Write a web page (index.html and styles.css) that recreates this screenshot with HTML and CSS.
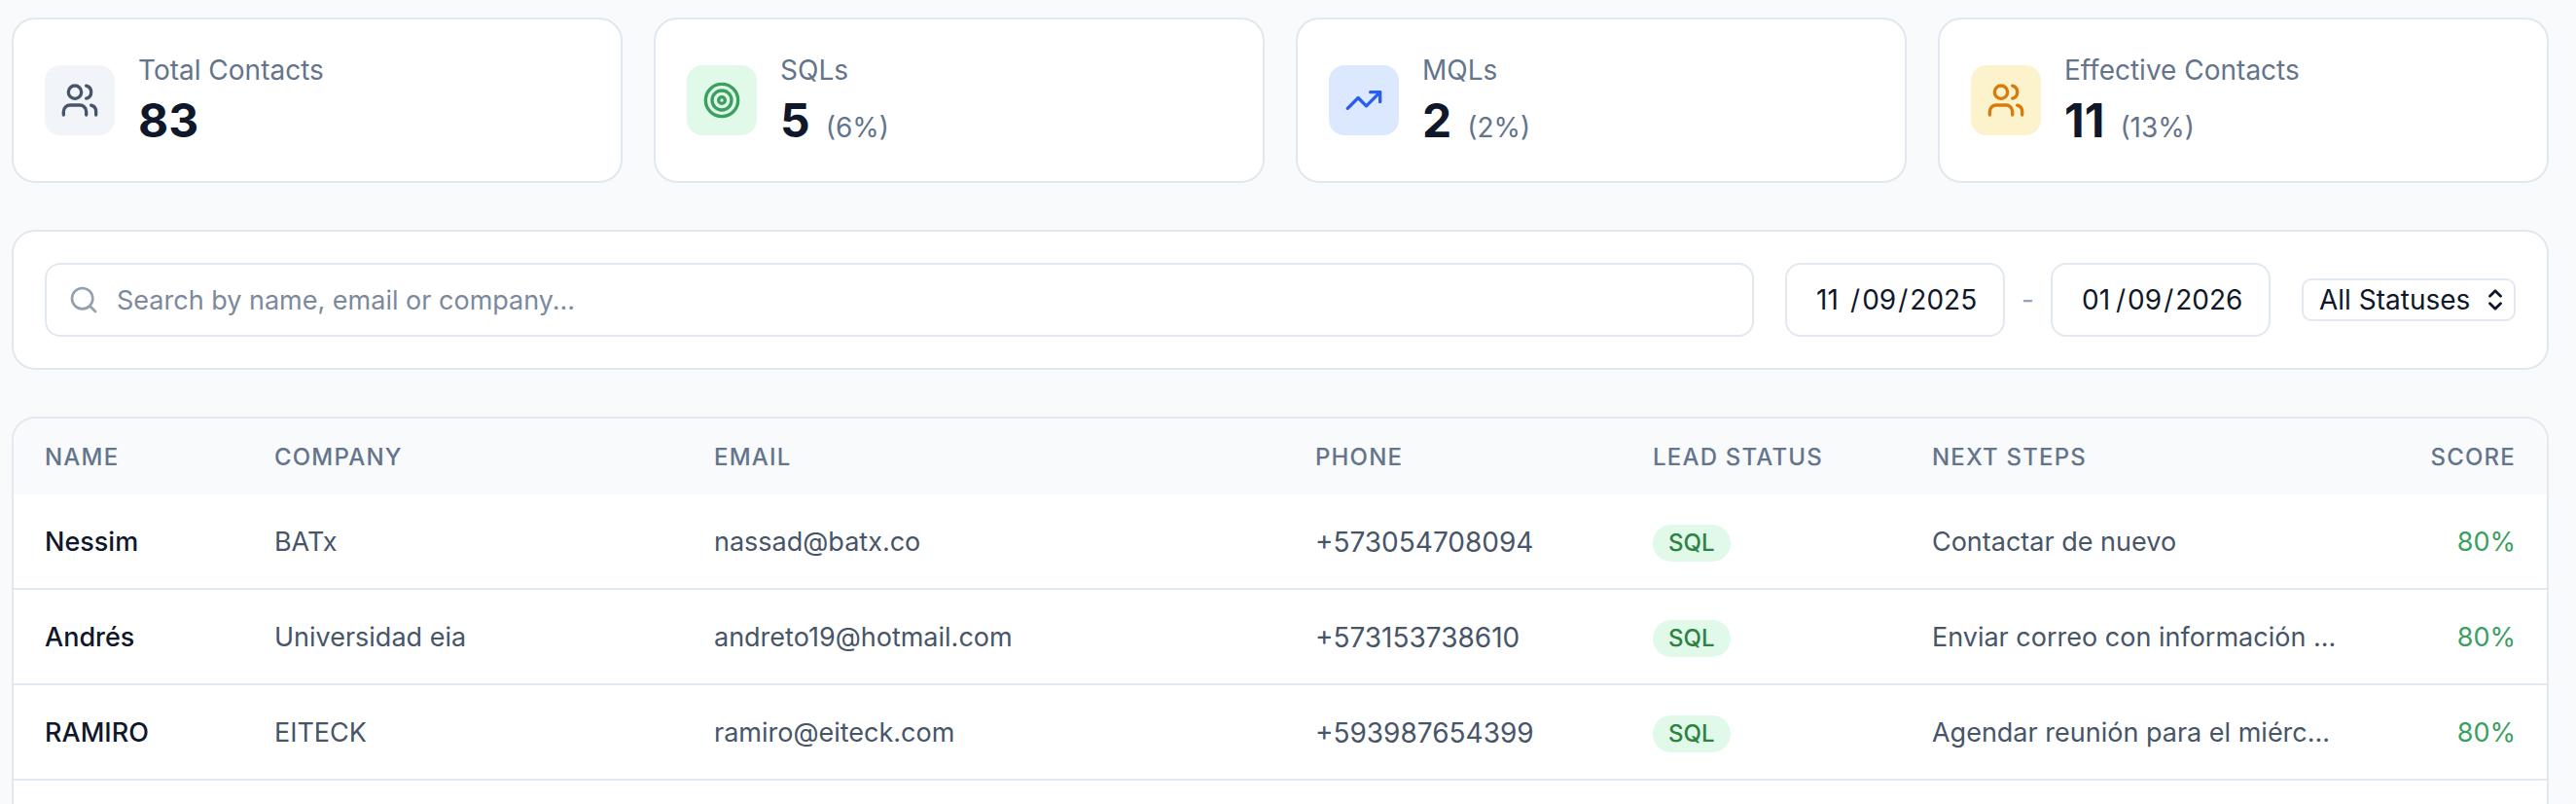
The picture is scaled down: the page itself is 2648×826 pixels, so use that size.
FILE: index.html
```html
<!DOCTYPE html>
<html lang="en">
  <head>
    <meta charset="UTF-8" />
    <meta name="viewport" content="width=device-width, initial-scale=1.0" />
    <title>Contacts</title>

    <link rel="stylesheet" href="styles.css">
  </head>
  <body>
    <main class="page">
      <section class="stats">
        <div class="card stat">
          <div class="stat-icon slate">
            <svg class="icon" viewBox="0 0 24 24" aria-hidden="true">
              <path d="M16 21v-2a4 4 0 0 0-4-4H6a4 4 0 0 0-4 4v2" />
              <circle cx="9" cy="7" r="4" />
              <path d="M16 3.128a4 4 0 0 1 0 7.744" />
              <path d="M22 21v-2a4 4 0 0 0-3-3.87" />
            </svg>
          </div>
          <div class="stat-text">
            <p class="stat-label">Total Contacts</p>
            <p class="stat-value">83</p>
          </div>
        </div>

        <div class="card stat">
          <div class="stat-icon green">
            <svg class="icon" viewBox="0 0 24 24" aria-hidden="true">
              <circle cx="12" cy="12" r="10" />
              <circle cx="12" cy="12" r="6" />
              <circle cx="12" cy="12" r="2" />
            </svg>
          </div>
          <div class="stat-text">
            <p class="stat-label">SQLs</p>
            <p class="stat-value">5 <span class="percent">(6%)</span></p>
          </div>
        </div>

        <div class="card stat">
          <div class="stat-icon blue">
            <svg class="icon" viewBox="0 0 24 24" aria-hidden="true">
              <path d="M16 7h6v6" />
              <path d="m22 7-8.5 8.5-5-5L2 17" />
            </svg>
          </div>
          <div class="stat-text">
            <p class="stat-label">MQLs</p>
            <p class="stat-value">2 <span class="percent">(2%)</span></p>
          </div>
        </div>

        <div class="card stat">
          <div class="stat-icon amber">
            <svg class="icon" viewBox="0 0 24 24" aria-hidden="true">
              <path d="M16 21v-2a4 4 0 0 0-4-4H6a4 4 0 0 0-4 4v2" />
              <circle cx="9" cy="7" r="4" />
              <path d="M16 3.128a4 4 0 0 1 0 7.744" />
              <path d="M22 21v-2a4 4 0 0 0-3-3.87" />
            </svg>
          </div>
          <div class="stat-text">
            <p class="stat-label">Effective Contacts</p>
            <p class="stat-value">11 <span class="percent">(13%)</span></p>
          </div>
        </div>
      </section>

      <form class="card filters">
        <label class="field search">
          <svg class="icon search-icon" viewBox="0 0 24 24" aria-hidden="true">
            <circle cx="11" cy="11" r="8" />
            <path d="m21 21-4.34-4.34" />
          </svg>
          <input class="search-input" type="text" placeholder="Search by name, email or company..." aria-label="Search contacts" />
        </label>

        <div class="dates">
          <input class="field date" type="date" value="2025-11-09" aria-label="From" />
          <span class="dash">-</span>
          <input class="field date" type="date" value="2026-01-09" aria-label="To" />
        </div>

        <label class="status">
          <select class="status-select" aria-label="Lead status">
            <option>All Statuses</option>
          </select>
          <svg class="icon status-arrows" viewBox="0 0 16 24" aria-hidden="true">
            <path d="m2 8 6-6 6 6" />
            <path d="m2 16 6 6 6-6" />
          </svg>
        </label>
      </form>

      <div class="card table-card">
        <table class="contacts">
          <colgroup>
            <col class="col-name" />
            <col class="col-company" />
            <col class="col-email" />
            <col class="col-phone" />
            <col class="col-status" />
            <col class="col-steps" />
            <col class="col-score" />
          </colgroup>
          <thead>
            <tr>
              <th>Name</th>
              <th>Company</th>
              <th>Email</th>
              <th>Phone</th>
              <th>Lead Status</th>
              <th>Next Steps</th>
              <th class="score">Score</th>
            </tr>
          </thead>
          <tbody>
            <tr>
              <td class="name">Nessim</td>
              <td>BATx</td>
              <td>nassad@batx.co</td>
              <td class="phone">+573054708094</td>
              <td><span class="badge">SQL</span></td>
              <td>Contactar de nuevo</td>
              <td class="score">80%</td>
            </tr>
            <tr>
              <td class="name">Andrés</td>
              <td>Universidad eia</td>
              <td>andreto19@hotmail.com</td>
              <td class="phone">+573153738610</td>
              <td><span class="badge">SQL</span></td>
              <td>Enviar correo con información ...</td>
              <td class="score">80%</td>
            </tr>
            <tr>
              <td class="name">RAMIRO</td>
              <td>EITECK</td>
              <td>ramiro@eiteck.com</td>
              <td class="phone">+593987654399</td>
              <td><span class="badge">SQL</span></td>
              <td>Agendar reunión para el miérc...</td>
              <td class="score">80%</td>
            </tr>
          </tbody>
        </table>
      </div>
    </main>
  </body>
</html>
```
FILE: styles.css
```css
:root {
  --border: #e2e8f0;
  --background: #f8fafc;
  --dark: #0f172a;
  --text: #475569;
  --muted: #64748b;
  --light: #94a3b8;
  --green: #3a9f5f;
  --green-background: #e1f9e8;
}

* {
  box-sizing: border-box;
}

html,
body {
  height: 100%;
}

body {
  margin: 0;
  overflow: hidden;
  background: var(--background);
  color: var(--dark);
  font-family: "Inter", sans-serif;
  font-size: 28px;
  line-height: 40px;
}

p {
  margin: 0;
}

input,
select {
  font: inherit;
  color: inherit;
}

.page {
  display: flex;
  flex-direction: column;
  gap: 48px;
  height: 100%;
  padding: 18px 28px 0 12px;
}

.card {
  background: #fff;
  border: 2px solid var(--border);
  border-radius: 24px;
}

.icon {
  width: 40px;
  height: 40px;
  fill: none;
  stroke: currentColor;
  stroke-width: 2;
  stroke-linecap: round;
  stroke-linejoin: round;
}

/* stats */
.stats {
  display: grid;
  grid-template-columns: repeat(4, 1fr);
  gap: 32px;
}

.stat {
  display: flex;
  align-items: center;
  gap: 24px;
  padding: 30px 32px;
}

.stat-icon {
  display: flex;
  align-items: center;
  justify-content: center;
  width: 72px;
  height: 72px;
  border-radius: 16px;
}

.slate {
  background: #f1f5f9;
  color: #475569;
}

.green {
  background: var(--green-background);
  color: var(--green);
}

.blue {
  background: #dbe8fd;
  color: #2b5cf0;
}

.amber {
  background: #fcf2cb;
  color: #d97a0b;
}

.stat-text {
  padding-top: 2px;
}

.stat-label {
  color: var(--muted);
}

.stat-value {
  display: flex;
  align-items: baseline;
  gap: 16px;
  font-size: 48px;
  font-weight: 700;
  line-height: 64px;
}

.percent {
  color: var(--muted);
  font-size: 28px;
  font-weight: 400;
  line-height: 40px;
}

/* filters */
.filters {
  display: flex;
  align-items: center;
  gap: 32px;
  padding: 32px;
}

.field {
  height: 76px;
  background: #fff;
  border: 2px solid var(--border);
  border-radius: 16px;
}

.search {
  display: flex;
  flex: 1;
  align-items: center;
  gap: 18px;
  padding: 0 22px;
}

.search-icon {
  width: 32px;
  height: 32px;
  color: #94a0b0;
}

.search-input {
  flex: 1;
  padding: 2px 0 0;
  border: none;
  outline: none;
  background: none;
  font-size: 27px;
}

.search-input::placeholder {
  color: #7c899d;
}

.dates {
  display: flex;
  align-items: center;
  gap: 17px;
}

.date {
  width: 226px;
  padding: 0 16px 0 30px;
}

.date::-webkit-calendar-picker-indicator {
  display: none;
}

.date::-webkit-datetime-edit-month-field {
  display: inline-block;
  width: 34px;
  padding: 0;
  text-align: left;
}

.date::-webkit-datetime-edit-text {
  padding: 0 1px;
}

.dash {
  color: var(--light);
}

.status {
  display: grid;
  align-items: center;
}

.status-select {
  grid-area: 1 / 1;
  width: 220px;
  height: 44px;
  padding: 0 16px;
  appearance: none;
  background: #fff;
  border: 2px solid var(--border);
  border-radius: 10px;
  line-height: 40px;
}

.status-arrows {
  grid-area: 1 / 1;
  justify-self: end;
  width: 16px;
  height: 22px;
  margin-right: 13px;
  stroke-width: 3;
  pointer-events: none;
}

/* table */
.table-card {
  flex: 1;
  border-bottom: none;
  border-radius: 24px 24px 0 0;
  overflow: hidden;
}

.contacts {
  width: 100%;
  table-layout: fixed;
  border-collapse: separate;
  border-spacing: 0;
}

.col-name {
  width: 9.06%;
}

.col-company {
  width: 17.36%;
}

.col-email {
  width: 23.73%;
}

.col-phone {
  width: 13.33%;
}

.col-status {
  width: 11.02%;
}

.col-steps {
  width: 18%;
}

.contacts th {
  padding: 24px 32px 22px;
  background: var(--background);
  color: var(--muted);
  font-size: 24px;
  font-weight: 500;
  line-height: 32px;
  letter-spacing: 0.05em;
  text-align: left;
  text-transform: uppercase;
  white-space: nowrap;
}

.contacts td {
  height: 98px;
  padding: 2px 32px 0;
  border-bottom: 2px solid var(--border);
  color: var(--text);
  font-size: 27px;
  white-space: nowrap;
}

.contacts .name {
  color: var(--dark);
  font-weight: 500;
}

.contacts .phone {
  font-size: 28px;
}

.contacts .score {
  text-align: right;
}

.contacts td.score {
  color: var(--green);
}

.badge {
  display: inline-block;
  padding: 3px 16px;
  border-radius: 19px;
  background: var(--green-background);
  color: #2c8243;
  font-size: 24px;
  font-weight: 500;
  line-height: 32px;
  vertical-align: middle;
}
```
